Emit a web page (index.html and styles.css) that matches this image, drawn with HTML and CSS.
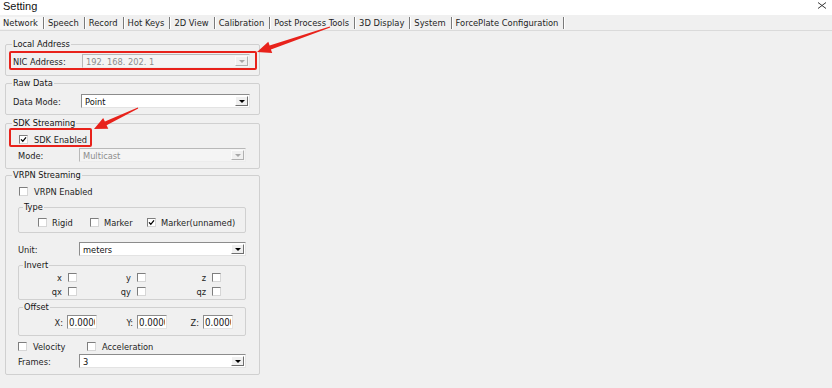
FILE: index.html
```html
<!DOCTYPE html>
<html lang="en">
<head>
    <meta charset="UTF-8">
    <title>Setting</title>
    <link rel="stylesheet" href="styles.css">
</head>
<body>
    <div class="window">
        <div class="titlebar">
            <span class="title">Setting</span>
            <svg class="close" width="10" height="7" viewBox="0 0 10 7"><path d="M1 0.5L9 6.5M9 0.5L1 6.5" stroke="#3a3a3a" stroke-width="1"/></svg>
        </div>
        <div class="tabs">
            <span class="tab active">Network</span>
            <span class="tab">Speech</span>
            <span class="tab">Record</span>
            <span class="tab">Hot Keys</span>
            <span class="tab">2D View</span>
            <span class="tab">Calibration</span>
            <span class="tab">Post Process Tools</span>
            <span class="tab">3D Display</span>
            <span class="tab">System</span>
            <span class="tab">ForcePlate Configuration</span>
        </div>

        <div class="panel">
            <fieldset class="group g-local">
                <legend>Local Address</legend>
                <div class="body">
                    <div class="row">
                        <span class="lbl w69">NIC Address:</span>
                        <div class="combo disabled"><span class="val">192. 168. 202. 1</span><span class="btn"></span></div>
                    </div>
                </div>
            </fieldset>

            <fieldset class="group g-raw">
                <legend>Raw Data</legend>
                <div class="body">
                    <div class="row">
                        <span class="lbl w68">Data Mode:</span>
                        <div class="combo"><span class="val">Point</span><span class="btn"></span></div>
                    </div>
                </div>
            </fieldset>

            <fieldset class="group g-sdk">
                <legend>SDK Streaming</legend>
                <div class="body">
                    <div class="check-row">
                        <span class="cb on"><svg width="7" height="7" viewBox="0 0 7 7"><path d="M1 3.4L2.8 5.3L6 1.3" fill="none" stroke="#000" stroke-width="1.3"/></svg></span>
                        <span>SDK Enabled</span>
                    </div>
                    <div class="row gap2">
                        <span class="lbl w61">Mode:</span>
                        <div class="combo disabled"><span class="val">Multicast</span><span class="btn"></span></div>
                    </div>
                </div>
            </fieldset>

            <fieldset class="group g-vrpn">
                <legend>VRPN Streaming</legend>
                <div class="body">
                    <div class="check-row">
                        <span class="cb"></span>
                        <span>VRPN Enabled</span>
                    </div>

                    <fieldset class="group sub g-type">
                        <legend>Type</legend>
                        <div class="type-row">
                            <div class="check-row"><span class="cb"></span><span>Rigid</span></div>
                            <div class="check-row"><span class="cb"></span><span>Marker</span></div>
                            <div class="check-row"><span class="cb on"><svg width="7" height="7" viewBox="0 0 7 7"><path d="M1 3.4L2.8 5.3L6 1.3" fill="none" stroke="#000" stroke-width="1.3"/></svg></span><span>Marker(unnamed)</span></div>
                        </div>
                    </fieldset>

                    <div class="row unit-row">
                        <span class="lbl w61">Unit:</span>
                        <div class="combo"><span class="val">meters</span><span class="btn"></span></div>
                    </div>

                    <fieldset class="group sub g-invert">
                        <legend>Invert</legend>
                        <div class="invert-grid">
                            <div class="pair"><span>x</span><span class="cb"></span></div>
                            <div class="pair"><span>y</span><span class="cb"></span></div>
                            <div class="pair"><span>z</span><span class="cb"></span></div>
                            <div class="pair"><span>qx</span><span class="cb"></span></div>
                            <div class="pair"><span>qy</span><span class="cb"></span></div>
                            <div class="pair"><span>qz</span><span class="cb"></span></div>
                        </div>
                    </fieldset>

                    <fieldset class="group sub g-offset">
                        <legend>Offset</legend>
                        <div class="offset-grid">
                            <div class="pair"><span>X:</span><input class="num" type="text" value="0.0000"></div>
                            <div class="pair"><span>Y:</span><input class="num" type="text" value="0.0000"></div>
                            <div class="pair"><span>Z:</span><input class="num" type="text" value="0.0000"></div>
                        </div>
                    </fieldset>

                    <div class="motion-row">
                        <div class="check-row"><span class="cb"></span><span>Velocity</span></div>
                        <div class="check-row"><span class="cb"></span><span>Acceleration</span></div>
                    </div>

                    <div class="row frames-row">
                        <span class="lbl w61">Frames:</span>
                        <div class="combo"><span class="val">3</span><span class="btn"></span></div>
                    </div>
                </div>
            </fieldset>
        </div>

        <!-- red annotation marks drawn over the dialog -->
        <svg class="marks" width="832" height="388" viewBox="0 0 832 388">
            <rect x="10" y="52" width="246" height="17" rx="1" fill="none" stroke="#e8221b" stroke-width="2"/>
            <rect x="10" y="129" width="81" height="17" rx="1" fill="none" stroke="#e8221b" stroke-width="2"/>
            <polygon points="329.8,26.5 269.6,45.6 268.3,41.8 257,52 272.2,53.1 270.9,49.4 330.2,27.5" fill="#e8221b"/>
            <polygon points="137.8,107.5 104.9,121.6 103.2,118 94,129 108.3,128.8 106.6,125.2 138.2,108.5" fill="#e8221b"/>
        </svg>
    </div>
</body>
</html>
```

FILE: styles.css
```css
body {
    margin: 0;
    background: #f0f0f0;
    font-family: "DejaVu Sans Condensed", "DejaVu Sans", sans-serif;
    font-size: 9.2px;
    color: #1e1e1e;
}

.window {
    position: relative;
    width: 832px;
    height: 388px;
    background: #f0f0f0;
    overflow: hidden;
}

.titlebar {
    height: 15px;
    box-sizing: border-box;
    background: #fff;
    display: flex;
    align-items: flex-start;
    justify-content: space-between;
    padding: 0 5px 0 3px;
}

.title {
    font-family: "Liberation Sans", Arial, sans-serif;
    font-size: 11px;
    line-height: 13px;
    color: #111;
}

.close {
    margin-top: 2px;
}

.tabs {
    display: flex;
    align-items: center;
    height: 14px;
    padding-top: 1px;
    border-bottom: 1px solid #dadada;
    font-size: 9.3px;
}

.tab {
    padding: 0 5px 0 3px;
    line-height: 12px;
    border-right: 1px solid #7a7a7a;
    margin-right: 1px;
    box-shadow: 1px 0 0 #fff;
    white-space: nowrap;
}

.tab.active {
    background: #f7f7f7;
}

.panel {
    width: 255px;
    padding: 8px 0 0 5px;
}

.group {
    margin: 0;
    padding: 0;
    min-width: 0;
    border: 1px solid #d0d0d0;
    border-radius: 2px;
}

.group legend {
    margin-left: 6px;
    padding: 0 1px;
    line-height: 10px;
    color: #141414;
}

.group.sub legend {
    margin-left: 4px;
}

.g-local .body { padding: 5px 9px 7px 7px; }
.g-raw { margin-top: 2px; }
.g-raw .body { padding: 6px 9px 6px 7px; }
.g-sdk { margin-top: 3px; }
.g-sdk .body { padding: 5px 13px 6px 12px; }
.g-vrpn { margin-top: 1px; }
.g-vrpn > .body { padding: 5px 13px 6px 12px; }

.row {
    display: flex;
    align-items: center;
    height: 14px;
}

.gap2 { margin-top: 2px; }

.lbl { flex: none; }
.w69 { width: 69px; }
.w68 { width: 68px; }
.w61 { width: 61px; }

.combo {
    flex: 1;
    height: 14px;
    box-sizing: border-box;
    display: flex;
    align-items: center;
    background: #fff;
    border: 1px solid;
    border-color: #8c8c8c #e3e3e3 #e3e3e3 #8c8c8c;
    color: #111;
}

.combo .val {
    flex: 1;
    padding-left: 3px;
    white-space: nowrap;
}

.combo .btn {
    width: 13px;
    height: 10px;
    margin-right: 1px;
    box-sizing: border-box;
    background: #f0f0f0;
    border: 1px solid;
    border-color: #fff #6f6f6f #6f6f6f #fff;
    display: flex;
    align-items: center;
    justify-content: center;
}

.combo .btn::after {
    content: "";
    border-left: 3px solid transparent;
    border-right: 3px solid transparent;
    border-top: 3px solid #000;
}

.combo.disabled {
    background: #f4f4f4;
    color: #8d8d8d;
    border-color: #b8b8b8 #ececec #ececec #b8b8b8;
}

.combo.disabled .btn {
    border-color: #fbfbfb #b0b0b0 #b0b0b0 #fbfbfb;
}

.combo.disabled .btn::after {
    border-top-color: #a8a8a8;
}

.check-row {
    display: flex;
    align-items: center;
    gap: 6px;
    height: 12px;
    padding-left: 1px;
}

.g-sdk .check-row { height: 13px; }

.cb {
    flex: none;
    width: 9px;
    height: 9px;
    box-sizing: border-box;
    background: #fff;
    border: 1px solid;
    border-color: #7e7e7e #d6d6d6 #d6d6d6 #7e7e7e;
    display: inline-flex;
    align-items: center;
    justify-content: center;
}

.g-type { margin-top: 5px; }

.type-row {
    display: grid;
    grid-template-columns: 52px 57px auto;
    padding: 4px 0 4px 19px;
}

.type-row .check-row { padding-left: 0; gap: 5px; }

.unit-row { margin-top: 9px; }

.g-invert { margin-top: 4px; }

.invert-grid {
    display: grid;
    grid-template-columns: 58px 69px 75px;
    grid-auto-rows: 12px;
    row-gap: 2px;
    padding: 1px 0 2px;
}

.pair {
    display: flex;
    align-items: center;
    justify-content: flex-end;
    gap: 6px;
}

.g-offset { margin-top: 2px; }

.offset-grid {
    display: grid;
    grid-template-columns: 78px 70px 66px;
    padding: 3px 0 6px;
}

.offset-grid .pair { gap: 4px; }

.num {
    width: 30px;
    height: 14px;
    box-sizing: border-box;
    margin: 0;
    padding: 0 1px;
    border: 1px solid;
    border-color: #8c8c8c #e3e3e3 #e3e3e3 #8c8c8c;
    background: #fff;
    font: inherit;
    font-size: 9.6px;
    color: #111;
    outline: none;
}

.motion-row {
    display: grid;
    grid-template-columns: 69px auto;
    margin-top: 4px;
}

.motion-row .check-row { padding-left: 0; }

.frames-row { margin-top: 2px; }

.marks {
    position: absolute;
    left: 0;
    top: 0;
    pointer-events: none;
}
```
